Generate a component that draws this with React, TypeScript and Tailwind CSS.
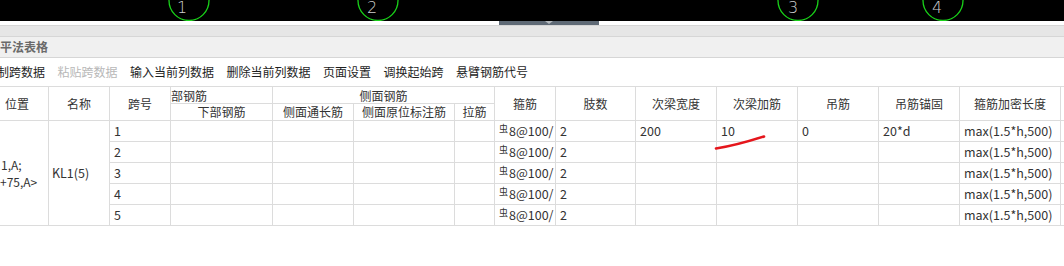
import React from "react";

const font = "font-['Noto_Sans_CJK_SC','Noto_Sans',sans-serif]";

const toolbarItems = [
  { label: "复制跨数据", disabled: false },
  { label: "粘贴跨数据", disabled: true },
  { label: "输入当前列数据", disabled: false },
  { label: "删除当前列数据", disabled: false },
  { label: "页面设置", disabled: false },
  { label: "调换起始跨", disabled: false },
  { label: "悬臂钢筋代号", disabled: false },
];

const spans = [1, 2, 3, 4, 5].map((n) => ({
  no: String(n),
  legs: "2",
  width: n === 1 ? "200" : "",
  extra: n === 1 ? "10" : "",
  hanger: n === 1 ? "0" : "",
  anchor: n === 1 ? "20*d" : "",
  dense: "max(1.5*h,500)",
}));

const cell = "border-r border-b border-[#dcdcdc] overflow-hidden whitespace-nowrap";

const Head = ({ children, className = "" }: { children?: React.ReactNode; className?: string }) => (
  <div className={`${cell} flex items-center justify-center text-[12px] text-[#333] ${className}`}>
    {children}
  </div>
);

const Td = ({ children }: { children?: React.ReactNode }) => (
  <div className={`${cell} flex items-center pl-[4px] text-[12.5px] text-[#333]`}>{children}</div>
);

const Stirrup = () => (
  <span className="flex items-center">
    <span className="text-[9px] leading-none -mt-[5px] mr-[1px]">虫</span>
    <span>8@100/</span>
  </span>
);

const CadStrip = () => (
  <div className="h-[21px] bg-black overflow-hidden">
    <svg width="1064" height="21" className="block">
      {[
        { cx: 189, tx: 182, t: "1" },
        { cx: 378, tx: 372, t: "2" },
        { cx: 798, tx: 793, t: "3" },
        { cx: 943, tx: 937, t: "4" },
      ].map((c) => (
        <g key={c.t}>
          <circle cx={c.cx} cy={0.5} r={20} fill="none" stroke="#19d119" strokeWidth={1.3} />
          <text
            x={c.tx}
            y={13}
            textAnchor="middle"
            fill="#cfcfcf"
            fontSize="16"
            fontWeight="200"
            fontFamily="DejaVu Sans, sans-serif"
          >
            {c.t}
          </text>
        </g>
      ))}
    </svg>
  </div>
);

export default function App() {
  return (
    <div className={`relative w-[1064px] h-[266px] overflow-hidden bg-white ${font}`}>
      <CadStrip />

      {/* splitter handle */}
      <div className="h-[4px] bg-white flex">
        <div className="ml-[499px] w-[100px] bg-[#5f6a76] flex justify-center">
          <div className="w-0 h-0 border-l-[4px] border-r-[4px] border-t-[3px] border-l-transparent border-r-transparent border-t-[#b6bbc0]" />
        </div>
      </div>
      <div className="h-[11px] bg-[#e6e6e6] border-t border-[#d6d6d6]" />
      <div className="h-[22px] bg-[#f0f0f0] border-t border-b border-[#d6d6d6] flex items-center">
        <span className="text-[12px] font-bold text-[#6a6a6a]">平法表格</span>
      </div>

      {/* toolbar */}
      <div className="h-[28px] flex items-center gap-[12.5px] -ml-[15px] text-[12px]">
        {toolbarItems.map((t) => (
          <span key={t.label} className={t.disabled ? "text-[#b8b8b8]" : "text-[#1e1e1e]"}>
            {t.label}
          </span>
        ))}
      </div>

      {/* table */}
      <div className="grid grid-cols-[49px_61px_61px_102px_81px_101px_40px_61px_80px_81px_81px_81px_81px_101px_1fr] grid-rows-[17px_17px_repeat(5,21px)] border-t border-[#dcdcdc]">
        <Head className="row-span-2 !justify-start pl-[5px]">位置</Head>
        <Head className="row-span-2">名称</Head>
        <Head className="row-span-2">跨号</Head>
        <Head className="!justify-start pt-[2px]">部钢筋</Head>
        <Head className="col-span-3 pt-[2px]">侧面钢筋</Head>
        <Head className="row-span-2">箍筋</Head>
        <Head className="row-span-2">肢数</Head>
        <Head className="row-span-2">次梁宽度</Head>
        <Head className="row-span-2">次梁加筋</Head>
        <Head className="row-span-2">吊筋</Head>
        <Head className="row-span-2">吊筋锚固</Head>
        <Head className="row-span-2">箍筋加密长度</Head>
        <Head className="row-span-2" />
        <Head>下部钢筋</Head>
        <Head>侧面通长筋</Head>
        <Head>侧面原位标注筋</Head>
        <Head>拉筋</Head>

        <div className={`${cell} row-span-5 flex flex-col justify-center gap-[0.5px] text-[12px] text-[#333]`}>
          <div className="pl-[1px] h-[17px] leading-[17px]">1,A;</div>
          <div className="h-[17px] leading-[17px]">+75,A&gt;</div>
        </div>
        <div className={`${cell} row-span-5 flex items-center pl-[3px] text-[12.5px] text-[#333]`}>KL1(5)</div>

        {spans.map((s) => (
          <React.Fragment key={s.no}>
            <Td>{s.no}</Td>
            <Td />
            <Td />
            <Td />
            <Td />
            <Td>
              <Stirrup />
            </Td>
            <Td>{s.legs}</Td>
            <Td>{s.width}</Td>
            <Td>{s.extra}</Td>
            <Td>{s.hanger}</Td>
            <Td>{s.anchor}</Td>
            <Td>{s.dense}</Td>
            <Td />
          </React.Fragment>
        ))}
      </div>

      {/* hand drawn mark */}
      <svg className="absolute left-0 top-0 pointer-events-none" width="1064" height="266">
        <path
          d="M716 148.5 C730 146.5 745 142.5 764 136.5"
          fill="none"
          stroke="#e5161c"
          strokeWidth={2.6}
          strokeLinecap="round"
        />
      </svg>
    </div>
  );
}
